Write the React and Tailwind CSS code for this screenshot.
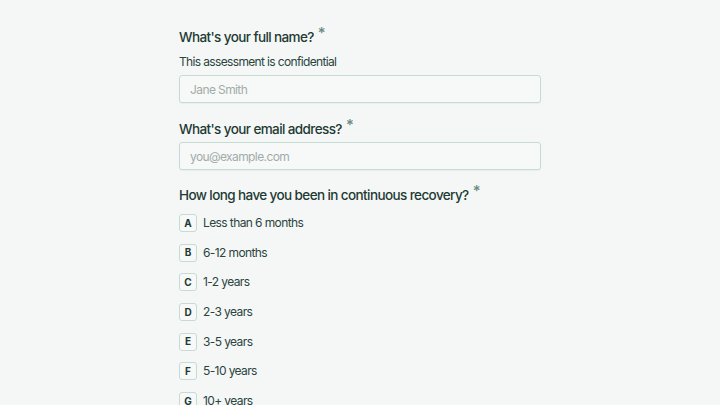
import React from "react";

const options = [
  ["A", "Less than 6 months"],
  ["B", "6-12 months"],
  ["C", "1-2 years"],
  ["D", "2-3 years"],
  ["E", "3-5 years"],
  ["F", "5-10 years"],
  ["G", "10+ years"],
];

function Label({ children }) {
  return (
    <div className="flex items-start text-[13.5px] font-medium leading-5 tracking-[-0.6px] text-[#1d3a33]">
      <span>{children}</span>
      <span className="ml-[4px] -mt-[4px] text-[15px] text-[#6b8a80]">*</span>
    </div>
  );
}

export default function App() {
  return (
    <div
      className="h-screen w-full bg-[#f5f7f6] overflow-hidden"
      style={{ fontFamily: "Inter, 'Noto Sans', sans-serif" }}
    >
      <div className="mx-auto w-[362px] pt-[27px]">
        {/* full name */}
        <Label>What's your full name?</Label>
        <div className="mt-[7px] text-[12px] leading-4 tracking-[-0.65px] text-[#2a443e]">
          This assessment is confidential
        </div>
        <input
          className="mt-[5px] h-[28px] w-full rounded-[3px] border border-[#c6dcd2] bg-[#f7f9f8] px-[10px] text-[12px] tracking-[-0.6px] text-[#1d3a33] shadow-[0_1px_1px_rgba(0,0,0,0.04)] placeholder:text-[#a1aca8] outline-none"
          placeholder="Jane Smith"
        />

        {/* email */}
        <div className="mt-[16px]">
          <Label>What's your email address?</Label>
        </div>
        <input
          className="mt-[3px] h-[28px] w-full rounded-[3px] border border-[#c6dcd2] bg-[#f7f9f8] px-[10px] text-[12px] tracking-[-0.6px] text-[#1d3a33] shadow-[0_1px_1px_rgba(0,0,0,0.04)] placeholder:text-[#a1aca8] outline-none"
          placeholder="you@example.com"
        />

        {/* recovery */}
        <div className="mt-[15px]">
          <Label>How long have you been in continuous recovery?</Label>
        </div>
        <div className="mt-[9px] flex flex-col gap-[11.7px]">
          {options.map(([k, v]) => (
            <div key={k} className="flex items-center gap-[6px]">
              <div className="flex h-[18px] w-[18px] items-center justify-center rounded-[3px] border border-[#c6dcd2] bg-[#f7f9f8] text-[10px] font-bold text-[#1d3a33]">
                {k}
              </div>
              <span className="text-[12px] leading-[18px] tracking-[-0.6px] text-[#2a443e]">{v}</span>
            </div>
          ))}
        </div>
      </div>
    </div>
  );
}
